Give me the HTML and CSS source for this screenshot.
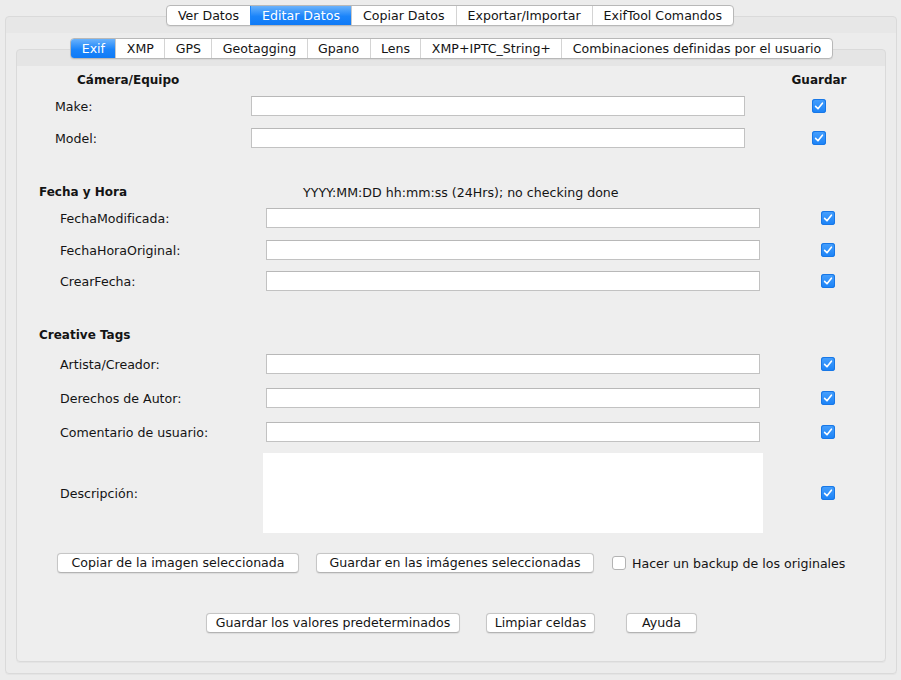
FILE: index.html
```html
<!DOCTYPE html>
<html lang="es">
<head>
<meta charset="utf-8">
<title>Editar Datos</title>
<link rel="stylesheet" href="styles.css">
</head>
<body>
<div class="window">
  <div class="tabs outer-tabs">
    <span class="tab">Ver Datos</span>
    <span class="tab sel">Editar Datos</span>
    <span class="tab">Copiar Datos</span>
    <span class="tab">Exportar/Importar</span>
    <span class="tab">ExifTool Comandos</span>
  </div>
  <div class="panel outer-panel">
    <div class="tabs inner-tabs">
      <span class="tab sel">Exif</span>
      <span class="tab">XMP</span>
      <span class="tab">GPS</span>
      <span class="tab">Geotagging</span>
      <span class="tab">Gpano</span>
      <span class="tab">Lens</span>
      <span class="tab">XMP+IPTC_String+</span>
      <span class="tab">Combinaciones definidas por el usuario</span>
    </div>
    <div class="panel inner-panel">
      <section class="sec sec-cam">
        <div class="row head-row">
          <span class="head cam-head">Cámera/Equipo</span>
          <span class="head save-head">Guardar</span>
        </div>
        <div class="row r-make">
          <label class="lbl">Make:</label>
          <input class="field" type="text">
          <span class="cb-cell"><span class="cb on"><svg viewBox="0 0 14 14"><path d="M3.6 7.4 L6 9.8 L10.4 4.2"/></svg></span></span>
        </div>
        <div class="row r-model">
          <label class="lbl">Model:</label>
          <input class="field" type="text">
          <span class="cb-cell"><span class="cb on"><svg viewBox="0 0 14 14"><path d="M3.6 7.4 L6 9.8 L10.4 4.2"/></svg></span></span>
        </div>
      </section>

      <section class="sec sec-date">
        <div class="row head-row">
          <span class="head sh">Fecha y Hora</span>
          <span class="hint">YYYY:MM:DD hh:mm:ss (24Hrs); no checking done</span>
        </div>
        <div class="row item r1">
          <label class="lbl">FechaModificada:</label>
          <input class="field" type="text">
          <span class="cb on"><svg viewBox="0 0 14 14"><path d="M3.6 7.4 L6 9.8 L10.4 4.2"/></svg></span>
        </div>
        <div class="row item r2">
          <label class="lbl">FechaHoraOriginal:</label>
          <input class="field" type="text">
          <span class="cb on"><svg viewBox="0 0 14 14"><path d="M3.6 7.4 L6 9.8 L10.4 4.2"/></svg></span>
        </div>
        <div class="row item r3">
          <label class="lbl">CrearFecha:</label>
          <input class="field" type="text">
          <span class="cb on"><svg viewBox="0 0 14 14"><path d="M3.6 7.4 L6 9.8 L10.4 4.2"/></svg></span>
        </div>
      </section>

      <section class="sec sec-tags">
        <div class="row head-row">
          <span class="head sh">Creative Tags</span>
        </div>
        <div class="row item t1">
          <label class="lbl">Artista/Creador:</label>
          <input class="field" type="text">
          <span class="cb on"><svg viewBox="0 0 14 14"><path d="M3.6 7.4 L6 9.8 L10.4 4.2"/></svg></span>
        </div>
        <div class="row item t2">
          <label class="lbl">Derechos de Autor:</label>
          <input class="field" type="text">
          <span class="cb on"><svg viewBox="0 0 14 14"><path d="M3.6 7.4 L6 9.8 L10.4 4.2"/></svg></span>
        </div>
        <div class="row item t3">
          <label class="lbl">Comentario de usuario:</label>
          <input class="field" type="text">
          <span class="cb on"><svg viewBox="0 0 14 14"><path d="M3.6 7.4 L6 9.8 L10.4 4.2"/></svg></span>
        </div>
        <div class="row item t4">
          <label class="lbl lbl-area">Descripción:</label>
          <textarea class="area"></textarea>
          <span class="cb on"><svg viewBox="0 0 14 14"><path d="M3.6 7.4 L6 9.8 L10.4 4.2"/></svg></span>
        </div>
      </section>

      <div class="actions">
        <button class="btn b-copy">Copiar de la imagen seleccionada</button>
        <button class="btn b-save">Guardar en las imágenes seleccionadas</button>
        <span class="cb off"></span>
        <span class="cb-label">Hacer un backup de los originales</span>
      </div>

      <div class="bottom">
        <button class="btn b-def">Guardar los valores predeterminados</button>
        <button class="btn b-clear">Limpiar celdas</button>
        <button class="btn b-help">Ayuda</button>
      </div>
    </div>
  </div>
</div>
</body>
</html>
```
FILE: styles.css
```css
* { box-sizing: border-box; }
html, body { margin: 0; padding: 0; }
body {
  background: #ececec;
  font-family: "DejaVu Sans", "Liberation Sans", sans-serif;
  font-size: 12.6px;
  color: #141414;
  width: 901px;
  height: 680px;
  overflow: hidden;
}
.window {
  padding: 5px 4px 0 5px;
  display: flex;
  flex-direction: column;
}

/* tabs */
.tabs {
  align-self: center;
  display: flex;
  height: 21px;
  background: #fff;
  border: 1px solid #b8b8b8;
  border-radius: 4px;
  box-shadow: 0 1px 1px rgba(0,0,0,0.06);
  overflow: hidden;
  position: relative;
  z-index: 2;
}
.tab {
  padding: 0 11px;
  line-height: 19px;
  border-left: 1px solid #d4d4d4;
  color: #141414;
  white-space: nowrap;
}
.inner-tabs .tab { padding: 0 10.4px; }
.tab:first-child { border-left: none; }
.tab.sel {
  background: linear-gradient(#6ab2fb, #1a84fa 55%, #0f7af6);
  color: #fff;
  border-left-color: #1a84fa;
}
.tab.sel + .tab { border-left-color: #c8c8c8; }
.outer-tabs { margin-right: 2px; }
.inner-tabs { margin-left: 1px; }

/* panels */
.panel {
  border: 1px solid #dadada;
  border-radius: 4px;
  box-shadow: 0 1px 0 #e4e4e4;
  display: flex;
  flex-direction: column;
}
.outer-panel {
  margin-top: -10px;
  height: 658px;
  padding: 21px 10px 0 10px;
  background: linear-gradient(#e7e7e7 0, #e7e7e7 16px, #ececec 16px);
}
.inner-panel {
  margin-top: -10px;
  height: 613px;
  padding-top: 20px;
  background: linear-gradient(#e5e5e5 0, #e5e5e5 16px, #eeeeee 16px);
}

/* rows */
.row {
  display: flex;
  align-items: center;
  height: 20px;
}
.head { font-weight: bold; font-size: 12px; line-height: 20px; white-space: nowrap; }
.lbl { line-height: 20px; white-space: nowrap; flex: none; padding-top: 1px; }
.field {
  display: block;
  flex: none;
  width: 494px;
  height: 20px;
  margin: 0;
  padding: 0 3px;
  border: 1px solid #c2c2c2;
  border-top-color: #b8b8b8;
  background: #fff;
  font: inherit;
  outline: none;
}
.area {
  display: block;
  flex: none;
  width: 500px;
  height: 80px;
  margin: 0;
  border: none;
  background: #fff;
  resize: none;
  font: inherit;
  outline: none;
}

/* camera section */
.sec-cam { margin-left: 38px; }
.sec-cam .cam-head { width: 734px; padding-left: 22px; }
.sec-cam .save-head { width: 60px; text-align: center; }
.sec-cam .lbl { width: 196px; }
.cb-cell { width: 60px; margin-left: 44px; display: flex; justify-content: center; }
.r-make { margin-top: 6px; }
.r-model { margin-top: 12px; }

/* date + tags sections */
.sec-date, .sec-tags { margin-left: 22px; margin-top: 34px; }
.sec-date .sh { width: 264px; }
.hint { line-height: 20px; white-space: nowrap; padding-top: 1px; }
.item { padding-left: 21px; }
.item .lbl { width: 206px; }
.item .cb { margin-left: 61px; }
.r1 { margin-top: 6px; }
.r2 { margin-top: 12px; }
.r3 { margin-top: 11px; }
.t1 { margin-top: 9px; }
.t2 { margin-top: 14px; }
.t3 { margin-top: 14px; }
.t4 { margin-top: 11px; height: 80px; }
.item .lbl-area { width: 203px; }
.t4 .cb { margin-left: 58px; }

/* checkboxes */
.cb {
  display: inline-block;
  width: 14px;
  height: 14px;
  border-radius: 3px;
  flex: none;
}
.cb.on {
  background: linear-gradient(#47a0fd, #1a82f7);
  box-shadow: inset 0 0 0 1px #1877e6;
}
.cb.on svg { display: block; width: 14px; height: 14px; }
.cb.on path {
  fill: none;
  stroke: #fff;
  stroke-width: 1.6;
  stroke-linecap: round;
  stroke-linejoin: round;
}
.cb.off {
  background: #fff;
  border: 1px solid #b3b3b3;
}

/* buttons */
.btn {
  flex: none;
  height: 20px;
  margin: 0;
  padding: 0;
  background: #fff;
  border: 1px solid #c6c6c6;
  border-bottom-color: #b3b3b3;
  border-radius: 4px;
  box-shadow: 0 0.5px 1px rgba(0,0,0,0.08);
  font: inherit;
  color: #141414;
  line-height: 18px;
  text-align: center;
  white-space: nowrap;
}
.actions {
  display: flex;
  align-items: center;
  height: 20px;
  margin: 20px 0 0 40px;
}
.b-copy { width: 242px; }
.b-save { width: 278px; margin-left: 17px; }
.actions .cb { margin-left: 18px; }
.cb-label { margin-left: 6px; line-height: 20px; white-space: nowrap; padding-top: 1px; }

.bottom {
  display: flex;
  align-items: center;
  height: 20px;
  margin: 40px 0 0 189px;
}
.b-def { width: 254px; }
.b-clear { width: 109px; margin-left: 26px; }
.b-help { width: 71px; margin-left: 31px; }
```
